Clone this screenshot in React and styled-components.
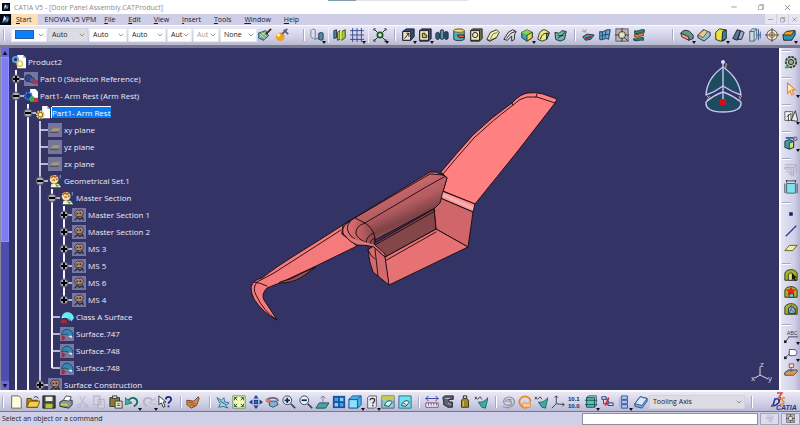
import React from "react";
import styled, { createGlobalStyle } from "styled-components";
import { FiChevronDown, FiMinus, FiX } from "react-icons/fi";
import { VscChromeRestore } from "react-icons/vsc";

const line = { fill: "none", stroke: "#111", strokeWidth: 1 };

// every glyph is drawn on a 16 x 16 grid
const glyphs = {
    app: (
        <>
            <rect width="16" height="16" fill="#05070f" />
            <path d="M2 13 9 3l5 2-5 7z" fill="#1d5fb8" />
            <path d="M6 2l3 5-5 4z" fill="#e8f4ff" />
            <path d="M9 7l4 1-3 5z" fill="#e8862a" />
        </>
    ),
    brush: (
        <>
            <path d="M0 6l9-3 3 6-6 5-6-3z" fill="#5aa4bd" stroke="#1b4a63" />
            <path d="M2 7l6 5M4 5l6 5M2 11l7-7" stroke="#eceb7c" />
            <path d="M9 7l6-6" stroke="#3b2a14" strokeWidth="2" />
        </>
    ),
    wizard: (
        <>
            <circle cx="6" cy="10" r="5" fill="#f0a020" />
            <circle cx="4" cy="8" r="2" fill="#fff0a8" />
            <path d="M8 7l6-6M10 2l5 5" stroke="#5a5a78" strokeWidth="2" />
        </>
    ),
    bodies: (
        <>
            <path d="M1 3l2-2 3 1v9l-2 1-3-2z" fill="#dcdcf0" stroke="#777" />
            <path d="M10 6l3-1 2 1v7l-2 1-3-1z" fill="#5a87a8" stroke="#16324a" />
            <path d="M5 13l6-2" stroke="#2c6a8a" />
        </>
    ),
    compare: (
        <>
            <path d="M1 3l3-1v9l-3 1z" fill="#4d86a8" stroke="#16324a" />
            <path d="M5 5l3-2v10l-3 1zM10 4l4-2v9l-4 3z" fill="#a7c840" stroke="#26401a" />
            <path d="M9 3v10" stroke="#e8e46a" strokeWidth="2" />
        </>
    ),
    grid: <path d="M0 3h16M0 8h16M0 13h16M3 0v16M8 0v16M13 0v16" stroke="#30408c" fill="none" />,
    snap: (
        <>
            <circle cx="8" cy="8" r="3" fill="#d6f0c8" stroke="#1b5a2a" strokeWidth="2" />
            <path d="M2 2l3 3M14 2l-3 3M2 14l3-3M14 14l-3-3M1 3V1h2M13 1h2v2M1 13v2h2M15 13v2h-2" {...line} />
        </>
    ),
    pad: (
        <>
            <path d="M2 4l4-3h9v9l-4 4H2z" fill="#3a4a78" stroke="#0d1222" />
            <path d="M2 4h9v10H2z" fill="#e9e6c8" stroke="#0d1222" />
            <path d="M4 12l5-6M9 6v4M9 6H6" stroke="#111" />
        </>
    ),
    pocket: (
        <>
            <path d="M2 3l2-2h11v11l-3 3H2z" fill="#4a4a66" stroke="#0d1222" />
            <path d="M2 3h10v11H2z" fill="#eeeab0" stroke="#0d1222" />
            <path d="M5 6v5h5V8H8V6z" fill="#bdbb68" stroke="#222" />
        </>
    ),
    shaft: (
        <>
            <rect x="1" y="5" width="4" height="8" rx="2" fill="#35627e" stroke="#0c2130" />
            <rect x="6" y="2" width="4" height="11" rx="2" fill="#5892b0" stroke="#0c2130" />
            <rect x="11" y="4" width="4" height="9" rx="2" fill="#2b4f66" stroke="#0c2130" />
        </>
    ),
    groove: (
        <>
            <path d="M2 3c2-2 10-2 12 0v10c-2 2-10 2-12 0z" fill="#57a9bd" stroke="#163c4a" />
            <ellipse cx="8" cy="3" rx="6" ry="2" fill="#eedf7c" stroke="#6a5a14" />
            <path d="M6 8h8v3H8z" fill="#d66a2a" stroke="#451a08" />
        </>
    ),
    hole: (
        <>
            <path d="M2 3l2-2h11v11l-3 3H2z" fill="#73704a" stroke="#14140d" />
            <path d="M2 3h10v11H2z" fill="#f2eeb4" stroke="#14140d" />
            <circle cx="7" cy="8" r="3" fill="#e4e4e4" stroke="#111" />
        </>
    ),
    rib: (
        <>
            <path d="M1 13l4-8 7-3 3 3-3 6-8 4z" fill="#f1edaf" stroke="#2a2a14" />
            <path d="M5 12l3-5 5-2" stroke="#707044" fill="none" />
            <path d="M1 13l3 2 8-4" stroke="#222" fill="#aaa860" />
        </>
    ),
    slot: (
        <>
            <path d="M1 13l5-8 5-3 4 2-2 4v5l-3 2V9l-5 5z" fill="#e4e6ea" stroke="#14141c" />
            <path d="M4 12l5-6 5-2" stroke="#14141c" fill="none" />
        </>
    ),
    solid: (
        <>
            <path d="M2 5l6-3 6 3v6l-6 4-6-4z" fill="#46a9b0" stroke="#113038" />
            <path d="M2 5l6-3 6 3-6 3z" fill="#8ad84c" />
            <path d="M8 8l6-3v6l-6 4z" fill="#e6d83c" stroke="#333" />
        </>
    ),
    loft: (
        <>
            <path d="M1 13c1-7 3-11 8-11l5 3-3 8-5 2z" fill="#e9ea8a" stroke="#24240d" />
            <path d="M4 13c1-5 3-7 8-7" {...line} />
            <path d="M11 6l3 0-3 7z" fill="#5cab9c" stroke="#123" />
        </>
    ),
    loftCut: (
        <>
            <path d="M1 5l5 1 3-3 5 1-2 9-5 2-5-2z" fill="#70b7a8" stroke="#0f2c2c" />
            <path d="M4 8c3 2 5 2 8-3M5 12c2-4 4-4 6-3" {...line} />
        </>
    ),
    extract: (
        <>
            <path d="M2 10l5-3 8 1-4 5-6 1z" fill="#3c9aa4" stroke="#0c2c38" />
            <path d="M5 12l7-2" stroke="#c03" strokeWidth="2" />
            <path d="M2 1l4 5M4 5l2-4M1 4h5" stroke="#e08a7c" />
        </>
    ),
    surface: (
        <>
            <path d="M2 4c4 2 6-3 12-2l-2 11c-4-3-6 2-10 0z" fill="#66a9d4" stroke="#0f2a44" />
            <path d="M5 4v9M9 3l-1 8M3 9c3 0 6-3 10-1" stroke="#123c66" fill="none" />
        </>
    ),
    inspect: (
        <>
            <rect x="1" y="1" width="14" height="14" fill="#b5b3bd" stroke="#555" />
            <circle cx="8" cy="8" r="4" fill="#e8e4c0" stroke="#333" />
            <path d="M8 0v5M8 11v5M0 8h5M11 8h5M10 10l5 5" stroke="#333" />
        </>
    ),
    layers: (
        <>
            <path d="M3 3c4 2 6-2 11-1v3c-5-1-7 3-11 1z" fill="#2c8c80" stroke="#0b3a38" />
            <path d="M3 7c4 2 6-2 10-1v3c-4-1-6 3-10 1z" fill="#de8a3e" stroke="#6a3311" />
            <path d="M2 12c4 2 6-2 11-1v3c-5-1-7 2-11 0z" fill="#2c8c80" stroke="#0b3a38" />
        </>
    ),
    fillet: (
        <>
            <path d="M1 6c2-4 7-4 10-2l4 4v4l-5 2z" fill="#5c9a8a" stroke="#122" />
            <path d="M1 6l9 4v4l-8-4z" fill="#e3a98a" stroke="#412" />
        </>
    ),
    chamfer: (
        <>
            <path d="M1 8l6-6 8 3v4l-7 6-7-4z" fill="#8fc3d8" stroke="#223" />
            <path d="M1 8l7-6 4 2-5 7z" fill="#ecc68e" stroke="#653" />
        </>
    ),
    draft: (
        <>
            <path d="M2 5l4-4 7 1-1 12-5 1-5-2z" fill="#e9e538" stroke="#22230a" />
            <path d="M10 4l4-2v10l-5 3z" fill="#388a9a" stroke="#112" />
        </>
    ),
    shell: (
        <>
            <path d="M2 12L7 2l4 1-4 11z" fill="#5d7790" stroke="#131a2c" />
            <path d="M8 13l3-10 4 2-3 8z" fill="#9eb2c4" stroke="#131a2c" />
        </>
    ),
    thickness: (
        <>
            <path d="M2 4l3-3h5v11l-3 3H2z" fill="#c9dbe6" stroke="#45586a" />
            <path d="M2 4h5v11M7 4l3-3" {...line} stroke="#45586a" />
            <path d="M12 1v13M10 8h5M14 4v8" stroke="#2d5f92" />
        </>
    ),
    target: (
        <>
            <circle cx="8" cy="8" r="6" fill="#f2ead0" stroke="#5a4a3a" />
            <path d="M8 0v16M0 8h16" stroke="#4a3a2a" />
            <circle cx="8" cy="8" r="3" fill="none" stroke="#8a6a4a" />
        </>
    ),
    split: (
        <>
            <path d="M1 8l4-4 10-1v5l-4 6H2z" fill="#2a93b0" stroke="#122" />
            <path d="M1 8l4-4 9-1-3 5z" fill="#eaa02a" stroke="#531" />
        </>
    ),
    gear: (
        <>
            <circle cx="8" cy="8" r="6" fill="#bcc4bc" stroke="#2d3a30" strokeWidth="2" strokeDasharray="3 1" />
            <circle cx="8" cy="8" r="3" fill="#93a893" stroke="#222" />
            <path d="M3 11l3 3M1 14h4" stroke="#3f9d56" strokeWidth="2" />
        </>
    ),
    cursor: <path d="M4 1v12l3-3 2 5 2-1-2-5h4z" fill="#ffe8c8" stroke="#e88a28" strokeWidth="1.2" />,
    sketch: (
        <>
            <path d="M1 3h9v10H1z" fill="#f3f3f8" stroke="#555" />
            <path d="M8 13l5-11 3 12zM3 9l5-4v8M5 6v8" fill="#fff" fillOpacity=".6" stroke="#333" />
        </>
    ),
    assembly: (
        <>
            <path d="M1 6l5-2 5 2v7l-5 2-5-2z" fill="#3fa09a" stroke="#0d2b34" />
            <path d="M6 8l5-2v7l-5 2z" fill="#d8dd78" stroke="#0d2b34" />
            <path d="M2 2h8l4 3" stroke="#2c5bb4" strokeWidth="2" fill="none" />
            <circle cx="13" cy="3" r="2" fill="#b9b6c8" stroke="#555" />
        </>
    ),
    ghost: (
        <path d="M1 5h10v10M1 5v2h8v8M11 5l3-3v9M1 2h13M3 10h4v4" fill="none" stroke="#a9a9bc" />
    ),
    box: (
        <>
            <path d="M3 4h10v11H3z" fill="#7fe3ee" stroke="#30606c" />
            <path d="M2 1h12M3 0v3M13 0v3M15 4v11M1 4v11" stroke="#333" />
        </>
    ),
    point: <rect x="6" y="6" width="4" height="4" fill="#14246c" />,
    segment: <path d="M2 14L14 2" stroke="#2a3c8c" strokeWidth="1.5" />,
    plane: <path d="M1 11l5-6h9l-5 6z" fill="#eef0a4" stroke="#54541e" />,
    domePick: (
        <>
            <path d="M1 14V6c1-5 12-6 14 0v8z" fill="#9cb52a" stroke="#252c08" />
            <path d="M5 14V8c1-3 5-3 6 0v6z" fill="#e9df6a" stroke="#333" />
            <path d="M9 6v8l2-2 2 3 1-1-2-3h3z" fill="#111" />
        </>
    ),
    domeRed: (
        <>
            <path d="M1 14V6c1-5 12-6 14 0v8z" fill="#a5b62a" stroke="#252c08" />
            <path d="M8 2l2 3 4 0-3 3 1 4-4-2-4 2 1-4-3-3 4 0z" fill="#e5261c" />
            <path d="M6 10h5v4H6z" fill="#73cbd0" stroke="#333" />
        </>
    ),
    domeMap: (
        <>
            <path d="M1 14V6c1-5 12-6 14 0v8z" fill="#a5b62a" stroke="#252c08" />
            <path d="M5 13V7l4-3 4 4v5z" fill="#68cfd6" stroke="#224" />
            <path d="M6 13l3-8 5 6M7 8l6 5" stroke="#b0286a" fill="none" />
        </>
    ),
    callout: (
        <>
            <text x="3" y="7" fontFamily="Liberation Sans" fontSize="6" fill="#333a58">ABC</text>
            <path d="M5 9h11M6 9l-4 5" stroke="#333a58" />
            <rect x="0" y="13" width="3" height="3" fill="#222" />
        </>
    ),
    tag: (
        <>
            <path d="M6 4h5c5 0 5 7 0 7H6zM6 9l-4 4" fill="#fff" stroke="#333a78" />
            <rect x="0" y="12" width="3" height="3" fill="#222" />
        </>
    ),
    apply: (
        <>
            <path d="M1 11l4-3h10l-4 5H1z" fill="#53b7ba" stroke="#225" />
            <path d="M1 11v3h10l4-4V8" fill="#de9750" stroke="#642" />
            <path d="M6 1h5v4H6zM8 5v5" fill="#f5e8e8" stroke="#a34" />
        </>
    ),
    page: <path d="M3 1h8l3 3v11H3z" fill="#fffde0" stroke="#5d5d48" />,
    open: (
        <>
            <path d="M1 4h5l1 2h6v8H1z" fill="#b98a1a" stroke="#553c06" />
            <path d="M1 14l3-7h12l-3 7z" fill="#f4ce4c" stroke="#6a4c0a" />
            <path d="M9 3c2-2 4-1 5 1" {...line} />
        </>
    ),
    save: (
        <>
            <path d="M1 1h14v14H1z" fill="#44484a" stroke="#15180f" />
            <path d="M4 2h8v5H4z" fill="#f0f0dc" />
            <path d="M4 10h8v5H4z" fill="#b9c42c" />
        </>
    ),
    print: (
        <>
            <path d="M1 8l4-2h10v5l-4 4-10-2z" fill="#8a9aa0" stroke="#222" />
            <path d="M5 6l3-5 6 1-2 5z" fill="#fff" stroke="#444" />
            <path d="M2 11h8" stroke="#d0d42c" strokeWidth="2" />
        </>
    ),
    cut: <path d="M4 1l6 10M11 1L5 11M5 11a2 2 0 1 0 0 3zM10 11a2 2 0 1 1 0 3z" fill="none" stroke="#b1b1c4" />,
    copy: <path d="M2 1h7v10H2zM7 5h7v10H7zM9 8h3M9 11h3" fill="#d5d5e4" stroke="#aaaabc" />,
    paste: (
        <>
            <path d="M1 3h11v10H1z" fill="#8c7c3c" stroke="#2c2814" />
            <path d="M4 1h5v3H4z" fill="#d8d8d8" stroke="#333" />
            <path d="M7 7h8v8H7z" fill="#e8eecb" stroke="#333" />
            <path d="M9 10h4M9 12h4" stroke="#555" />
        </>
    ),
    undo: (
        <>
            <path d="M4 6c4-5 10-2 10 2 0 3-2 4-4 5" fill="none" stroke="#16705e" strokeWidth="2" />
            <path d="M0 3v8l8-2z" fill="#3fb59a" stroke="#16705e" />
        </>
    ),
    redo: (
        <>
            <path d="M12 6c-4-5-10-2-10 2 0 3 2 4 4 5" fill="none" stroke="#b4b4c6" strokeWidth="2" />
            <path d="M16 3v8l-8-2z" fill="#d4d4e0" stroke="#b4b4c6" />
        </>
    ),
    what: (
        <>
            <path d="M1 1v10l3-2 2 5 2-1-2-5h3z" fill="#fff" stroke="#222" />
            <path d="M9 5c0-4 6-4 6 0 0 3-3 2-3 5M12 12v2" fill="none" stroke="#1c2c86" strokeWidth="2" />
        </>
    ),
    hand: (
        <>
            <path d="M1 6l8 1 5-5 1 2-3 8-6 3-5-4z" fill="#d98b54" stroke="#6a3a16" />
            <path d="M3 8l8 2M4 11l6 1" stroke="#8a4a20" />
        </>
    ),
    fly: (
        <>
            <path d="M1 3l5 3 3-3 1 5 5 1-4 3 3 3-6-2-5 1 2-4z" fill="#a9d4e4" stroke="#2a6a8a" />
            <path d="M5 7l6 4" stroke="#245" />
        </>
    ),
    fit: (
        <>
            <path d="M1 1h14v14H1z" fill="#f8f8bc" stroke="#5f8a52" />
            <path d="M3 3l3 3M13 3l-3 3M3 13l3-3M13 13l-3-3M3 6V3h3M13 6V3h-3M3 10v3h3M13 10v3h-3" {...line} stroke="#17501f" />
        </>
    ),
    pan: (
        <>
            <path d="M8 0l3 4H5zM8 16l3-4H5zM0 8l4-3v6zM16 8l-4-3v6z" fill="#1d3f96" />
            <rect x="6" y="6" width="4" height="4" fill="#2c72c0" stroke="#13296a" />
        </>
    ),
    rotate: (
        <>
            <path d="M2 8c0-6 12-6 13-1" fill="none" stroke="#6f6470" strokeWidth="2" />
            <path d="M5 7l8 0 2 4-6 3-4-2z" fill="#7fb1d6" stroke="#345" />
            <path d="M0 5l4 5 3-5z" fill="#d98264" />
        </>
    ),
    zoomIn: (
        <>
            <path d="M10 10l5 5" stroke="#445" strokeWidth="2" />
            <circle cx="6" cy="6" r="5" fill="#e5f4fb" stroke="#334" />
            <path d="M3 6h6M6 3v6" stroke="#12254e" strokeWidth="2" />
        </>
    ),
    zoomOut: (
        <>
            <path d="M10 10l5 5" stroke="#445" strokeWidth="2" />
            <circle cx="6" cy="6" r="5" fill="#e5f4fb" stroke="#334" />
            <path d="M3 6h6" stroke="#12254e" strokeWidth="2" />
        </>
    ),
    normal: (
        <>
            <path d="M1 15l4-6h11l-4 6z" fill="#49a8a0" stroke="#134a4a" />
            <path d="M9 11V2M6 4l3-3 3 3" fill="none" stroke="#8a66b0" />
        </>
    ),
    views: (
        <>
            <rect x="1" y="1" width="14" height="14" fill="#1b4fa4" />
            <path d="M3 3h4v4H3zM9 9h4v4H9z" fill="#3fa4e4" />
            <path d="M9 3h4v4H9zM3 9h4v4H3z" fill="#7fd4f8" />
        </>
    ),
    iso: (
        <>
            <path d="M1 5l4-4h10v10l-4 4H1z" fill="#42b8ea" stroke="#1d4c8a" />
            <path d="M1 5h10v10M11 5l4-4" fill="none" stroke="#1d4c8a" />
            <path d="M2 6h8v8H2z" fill="#8fe0fb" />
        </>
    ),
    hidden: (
        <>
            <path d="M3 3l2-2h8v12l-2 2H3z" fill="#e8e8f2" stroke="#556" />
            <path d="M6 6c0-3 5-3 5 0 0 2-2 2-2 4M9 11v2" fill="none" stroke="#223" strokeWidth="1.4" />
        </>
    ),
    hideA: (
        <>
            <path d="M1 1h14v14H1z" fill="#7fd2de" stroke="#556" />
            <path d="M1 1h14v5H1z" fill="#c6c95a" />
            <path d="M4 12c1-5 6-7 9-4l-4 5z" fill="#d5f3ee" stroke="#234" />
        </>
    ),
    hideB: (
        <>
            <path d="M1 1h14v14H1z" fill="#6fe0ee" stroke="#367" />
            <path d="M4 12c1-5 6-7 9-4l-4 5z" fill="#e0f3f8" stroke="#234" />
            <path d="M6 9l3 2" stroke="#234" />
        </>
    ),
    ruler: (
        <>
            <path d="M1 9h14v5H1z" fill="#f3f0f6" stroke="#7a4a6a" />
            <path d="M4 9v3M7 9v3M10 9v3M13 9v3" stroke="#7a4a6a" />
            <path d="M1 4h14M4 1L1 4l3 3M12 1l3 3-3 3" fill="none" stroke="#27389a" />
        </>
    ),
    measure: (
        <>
            <path d="M4 1h10v4H9v3h4v6H8l-5-3V7l-1-4z" fill="#5d6370" stroke="#161a24" />
            <path d="M5 4h5M8 9l3 2" stroke="#c6ccd4" />
        </>
    ),
    weight: (
        <>
            <path d="M4 6l2-2h4l2 2v8H4z" fill="#9c8a28" stroke="#33280a" />
            <path d="M6 4V1h4v3" {...line} />
            <path d="M6 7v6" stroke="#e4d46c" />
        </>
    ),
    measureSurf: (
        <>
            <path d="M5 8c4 1 7-1 11-5l-3 12-4-1z" fill="#3cae9f" stroke="#18605c" />
            <path d="M1 2l3 3 3-3 2 3M1 5l2-3" fill="none" stroke="#333" />
        </>
    ),
    swirl: (
        <path d="M8 8c1-2 4-1 4 1 0 4-8 4-9-1 0-6 9-8 12-2 2 6-7 11-13 7M5 8c1-3 5-4 7-2" fill="none" stroke="#8e9096" strokeWidth="1.3" />
    ),
    update: (
        <>
            <path d="M13 13c-8 5-14-4-10-9 5-5 12-1 11 4" fill="none" stroke="#ee8428" strokeWidth="2" />
            <path d="M5 13c1-6 3-6 4-3l5-1v5H7z" fill="#ffcf9c" stroke="#ee8428" />
        </>
    ),
    axis: <path d="M6 1v9l9 1M6 10l-5 5M4 3l2-2 2 2M13 9l2 2-2 2" {...line} stroke="#333" />,
    values: (
        <g fontFamily="Liberation Sans" fontSize="7" fontWeight="700" fill="#222a4a">
            <text x="1" y="7">10.1</text>
            <text x="1" y="15">10.0</text>
        </g>
    ),
    cylinder: (
        <>
            <path d="M3 3h9v11H3z" fill="#54c4b4" stroke="#145" />
            <path d="M3 3l2-2h9v11l-2 2M1 6h14M1 11h14" fill="none" stroke="#164a4a" />
        </>
    ),
    links: (
        <>
            <path d="M2 2h5v3H2zM9 9h6v3H9z" fill="#d8dcf0" stroke="#237" />
            <path d="M4 5v5h6M7 4l4 5" fill="none" stroke="#237" />
            <path d="M10 3l-4 9" stroke="#d22" strokeWidth="2" />
        </>
    ),
    stack: (
        <>
            <path d="M5 1h7v4H5zM5 6h7v4H5zM5 11h7v4H5z" fill="#a9c6ea" stroke="#2c4a9a" />
            <path d="M3 3v10" stroke="#9ab" />
        </>
    ),
    eraser: (
        <>
            <path d="M1 10l6-8 8 2v3l-6 8-8-2z" fill="#7fb0e4" stroke="#28488c" />
            <path d="M1 10l6-8 8 2-6 8z" fill="#d4e6f8" stroke="#28488c" />
        </>
    ),
    treeProduct: (
        <>
            <path d="M6 0h7l3 3v12H6z" fill="#fff" />
            <path d="M13 0v3h3z" fill="#78a8a0" />
            <circle cx="4" cy="5" r="3" fill="none" stroke="#56a2f0" strokeWidth="2" />
            <circle cx="9" cy="10" r="3" fill="#fff" stroke="#e6cc5c" strokeWidth="2" />
        </>
    ),
    treeHidden: (
        <>
            <rect width="16" height="16" fill="#77779c" />
            <circle cx="5" cy="7" r="4" fill="#2d478f" stroke="#1a2d66" />
            <circle cx="9" cy="9" r="3" fill="#5a5a7c" stroke="#333a66" />
            <path d="M10 9h6v5h-6z" fill="#a23a50" />
        </>
    ),
    treePart: (
        <>
            <path d="M7 0h6l3 3v11H7z" fill="#fff" />
            <circle cx="5" cy="8" r="4" fill="#133f98" stroke="#3f7fdc" strokeWidth="2" strokeDasharray="2 1" />
            <circle cx="9" cy="11" r="3" fill="#32b048" />
            <path d="M11 10h5v5h-5z" fill="#d8303c" />
        </>
    ),
    treeGear: (
        <>
            <path d="M7 0h6l3 3v11H7z" fill="#fff" />
            <path d="M13 0v3h3z" fill="#4f9c90" />
            <circle cx="5" cy="10" r="4" fill="#8c6a1a" stroke="#f3d878" strokeWidth="2" strokeDasharray="2 1" />
            <circle cx="5" cy="10" r="2" fill="#fff2b0" />
        </>
    ),
    treePlane: (
        <>
            <rect width="16" height="16" fill="#76769c" />
            <path d="M2 10l4-4h8l-3 4z" fill="#a49c72" />
            <path d="M2 10h10v1H2z" fill="#3d3d45" />
        </>
    ),
    treeSet: (
        <>
            <circle cx="7" cy="6" r="5" fill="#f3dfa0" />
            <path d="M3 5l3-3 2 2 3-2M5 7h3M9 6h2" stroke="#ad5a1c" fill="none" strokeWidth="1.5" />
            <path d="M4 11h8l3 4H3z" fill="#f1f3c8" />
            <path d="M8 11l5 2-3 2z" fill="#67a440" />
            <path d="M14 1v4" stroke="#7fb6ee" />
        </>
    ),
    treeSetHidden: (
        <>
            <rect width="16" height="16" fill="#77779f" />
            <path d="M3 5l3-3 2 1 3-1 2 3-1 4-4 1-4-1z" fill="#b08c74" stroke="#33333c" />
            <path d="M5 6h2M9 5l1 2" stroke="#5a2c1c" strokeWidth="2" />
            <path d="M3 14l3-3 3 2 3-2 1 3" stroke="#2b2b36" fill="none" strokeWidth="1.5" />
        </>
    ),
    treeSurface: (
        <>
            <path d="M2 9c0-8 12-9 14 0l-3 4c-1-4-7-6-11-4z" fill="#5cf0f4" />
            <path d="M2 9c4-2 8 0 9 3" stroke="#fff" fill="none" />
            <path d="M1 11h6l1 4H1z" fill="#b0242f" />
        </>
    ),
    treeSurfaceHidden: (
        <>
            <rect width="16" height="16" fill="#77779f" />
            <path d="M2 9c0-8 11-9 13 0l-3 4c-1-4-6-6-10-4z" fill="#3489b4" stroke="#1b4468" />
            <path d="M2 10h3v2h2l-3 3H2z" fill="#a22a3a" />
            <path d="M9 10l5 0-1 3z" fill="#e6e6f4" />
        </>
    ),
};

const Glyph = ({ name, size = 14 }) => (
    <svg width={size} height={size} viewBox="0 0 16 16" aria-hidden="true">{glyphs[name]}</svg>
);

// a trailing "+" marks a button that opens a flyout
const Tools = ({ items, vertical, grow }) => (
    <ToolGroup $vertical={vertical} $grow={grow ? items.length : 0}>
        {items.map((item) => {
            const name = item.replace("+", "");
            return (
                <ToolButton key={name} $grow={grow} aria-label={name}>
                    <Glyph name={name} />
                    {item.endsWith("+") && <Flyout />}
                </ToolButton>
            );
        })}
    </ToolGroup>
);

const Combo = ({ label, value, swatch, width, muted, disabled }) => (
    <ComboBox $width={width} $muted={muted}>
        <ComboSelect aria-label={label} disabled={disabled}>
            <option aria-label={label}>{value}</option>
        </ComboSelect>
        {swatch && <Swatch />}
        <FiChevronDown size={8} color="#666" />
    </ComboBox>
);

const menus = ["Start", "ENOVIA V5 VPM", "File", "Edit", "View", "Insert", "Tools", "Window", "Help"];

const combos = [
    { label: "Graphic color", swatch: true, width: 36 },
    { label: "Transparency", value: "Auto", width: 40, muted: true },
    { label: "Line thickness", value: "Auto", width: 38 },
    { label: "Line type", value: "Auto", width: 38 },
    { label: "Point symbol", value: "Aut", width: 25 },
    { label: "Rendering", value: "Aut", width: 26, disabled: true },
    { label: "Layer", value: "None", width: 37 },
];

const masterSections = ["Master Section 1", "Master Section 2", "MS 3", "MS 5", "MS 6", "MS 4"].map((name) => ({
    name,
    icon: "treeSetHidden",
    knob: "+",
}));

const tree = [
    { name: "Part 0 (Skeleton Reference)", icon: "treeHidden", knob: "+" },
    {
        name: "Part1- Arm Rest (Arm Rest)",
        icon: "treePart",
        knob: "-",
        children: [
            {
                name: "Part1- Arm Rest",
                icon: "treeGear",
                knob: "-",
                selected: true,
                trunk: "#c2c2dc",
                children: [
                    { name: "xy plane", icon: "treePlane" },
                    { name: "yz plane", icon: "treePlane" },
                    { name: "zx plane", icon: "treePlane" },
                    {
                        name: "Geometrical Set.1",
                        icon: "treeSet",
                        knob: "-",
                        closed: true,
                        children: [
                            { name: "Master Section", icon: "treeSet", knob: "-", closed: true, children: masterSections },
                            { name: "Class A Surface", icon: "treeSurface" },
                            { name: "Surface.747", icon: "treeSurfaceHidden" },
                            { name: "Surface.748", icon: "treeSurfaceHidden" },
                            { name: "Surface.748", icon: "treeSurfaceHidden" },
                        ],
                    },
                    { name: "Surface Construction", icon: "treeSetHidden", knob: "+" },
                ],
            },
        ],
    },
];

const Branch = ({ nodes, closed, nested, trunk = "#f4f4ff" }) => (
    <BranchList $closed={closed} $nested={nested} $trunk={trunk}>
        {nodes.map((node, i) => (
            <li key={i}>
                <TreeRow>
                    <svg width="14" height="12" viewBox="0 0 14 12" aria-hidden="true">
                        <path d="M6 6h8" stroke="#e4e4f4" strokeWidth="1.5" />
                        {node.knob && <circle cx="6" cy="6" r="4" fill="#aaaab4" stroke="#55556a" />}
                        {node.knob && <path d={node.knob === "+" ? "M3 6h6M6 3v6" : "M3 6h6"} stroke="#000" strokeWidth="2" />}
                    </svg>
                    <Glyph name={node.icon} />
                    <TreeLabel $selected={node.selected}>{node.name}</TreeLabel>
                </TreeRow>
                {node.children && <Branch nodes={node.children} closed={node.closed} trunk={node.trunk} nested />}
            </li>
        ))}
    </BranchList>
);

const ArmRest = () => (
    <Model viewBox="9 48 770 342" preserveAspectRatio="xMidYMid meet" role="img" aria-label="Arm rest">
        <defs>
            <linearGradient id="cushion" x1="385" y1="193" x2="401" y2="231" gradientUnits="userSpaceOnUse">
                <stop offset="0" stopColor="#c8686c" />
                <stop offset=".45" stopColor="#b45c60" />
                <stop offset=".8" stopColor="#7c4246" />
                <stop offset="1" stopColor="#9c5054" />
            </linearGradient>
            <linearGradient id="fold" x1="459" y1="197" x2="455" y2="206" gradientUnits="userSpaceOnUse">
                <stop offset="0" stopColor="#f47c7e" />
                <stop offset=".5" stopColor="#ffb4b4" />
                <stop offset="1" stopColor="#d0686c" />
            </linearGradient>
            <linearGradient id="nose" x1="344" y1="236" x2="374" y2="236" gradientUnits="userSpaceOnUse">
                <stop offset="0" stopColor="#e87478" />
                <stop offset=".6" stopColor="#b85c60" />
                <stop offset="1" stopColor="#8a484c" />
            </linearGradient>
        </defs>
        <g stroke="#1a0a10" strokeWidth=".9" strokeLinejoin="round" strokeLinecap="round" fill="none">
            <path d="M441 172Q456 154 473 135Q493 116 512 103Q520 94 528 93Q536 92 543 94L557 99L555 103L517 152L475 204L443 191L447 178Z" fill="#ff8080" />
            <path d="M443 174Q458 156 474 138Q494 119 513 105Q520 98 527 97L537 97L555 103" />
            <path d="M512 103L513 105M537 94L536 97" />
            <path d="M442 191L475 204L473 212L440 198Z" fill="url(#fold)" />
            <path d="M440 198L473 212L468 247L436 229L434 208Z" fill="#d0666a" />
            <path d="M385 257L436 229L468 247L389 285Z" fill="#e67274" />
            <path d="M385 261L436 232" />
            <path d="M374 246L385 257L389 285L373 272Q369 262 368 250Z" fill="#d46a6e" />
            <path d="M375 249L378 276M368 250Q370 256 375 259" />

            <path d="M343 225Q318 241 297 254Q276 267 262 278Q253 280 251 287Q251 293 254 299Q263 313 277 320Q270 309 264 300Q261 294 267 288L282 282L316 266L357 246L342 234Z" fill="#f47a7c" />
            <path d="M257 282L274 273L341 230" />
            <path d="M280 283Q292 283 302 277L316 267L302 273Q291 280 280 282Z" fill="#985054" />
            <path d="M254 282Q261 283 267 286M257 282Q252 288 256 295Q264 312 277 320" />

            <path d="M343 225L356 217L430 172L436 172L443 175L447 178L442 195L440 203L435 208L375 240L374 246L357 245L345 235Z" fill="url(#cushion)" />
            <path d="M375 243L434 209L436 229L385 257L374 247Z" fill="#834649" />
            <path d="M375 245L435 211" />
            <path d="M346 223L430 174L443 175M365 223L426 187L444 177" />
            <path d="M345 225Q341 230 344 235Q350 241 360 245L374 246L375 238Q373 228 365 223L355 218Z" fill="url(#nose)" />
            <path d="M350 222Q344 228 351 236Q359 244 374 246M365 223Q355 226 356 234Q358 239 367 243M374 233Q366 236 366 243M375 238Q370 240 370 244" />
            <path d="M345 236Q351 243 357 245Q368 245 374 247L385 257L385 254L375 245" fill="#d8787a" />
        </g>
    </Model>
);

export default function App() {
    return (
        <Window>
            <GlobalStyle />
            <TitleBar>
                <Glyph name="app" size={8} />
                <Title>CATIA V5 - [Door Panel Assembly.CATProduct]</Title>
                <TitleTab aria-hidden="true" />
                <WindowButtons>
                    <button aria-label="Minimize"><FiMinus size={8} /></button>
                    <button aria-label="Restore"><VscChromeRestore size={8} /></button>
                    <button aria-label="Close"><FiX size={9} /></button>
                </WindowButtons>
            </TitleBar>

            <MenuBar>
                <Glyph name="app" size={11} />
                {menus.map((name, i) => (
                    <MenuButton key={name} $active={i === 0} $tight={i === 1}>
                        {i === 1 ? name : <><u>{name[0]}</u>{name.slice(1)}</>}
                    </MenuButton>
                ))}
                <ChildButtons>
                    <button aria-label="Minimize document"><FiMinus size={7} /></button>
                    <button aria-label="Restore document"><VscChromeRestore size={7} /></button>
                    <button aria-label="Close document"><FiX size={7} /></button>
                </ChildButtons>
            </MenuBar>

            <ToolBar>
                <Handle />
                <ComboRow>
                    {combos.map((combo) => <Combo key={combo.label} {...combo} />)}
                </ComboRow>
                <Tools items={["brush", "wizard"]} />
                <Handle $before={13} $after={4} />
                <Tools items={["bodies+"]} />
                <Divider />
                <Tools items={["compare", "grid+"]} />
                <Divider />
                <Tools items={["snap+"]} />
                <Handle $before={6} $after={4} />
                <Tools items={["pad+", "pocket+", "shaft", "groove", "hole", "rib", "slot", "solid+", "loft", "loftCut"]} />
                <Handle $before={5} $after={4} />
                <Tools items={["extract", "surface", "inspect", "layers"]} />
                <Handle $before={25} $after={5} />
                <Tools items={["fillet+", "chamfer", "draft+", "shell", "thickness", "target", "split+"]} />
            </ToolBar>

            <Workspace>
                <ScrollBar>
                    <ScrollButton aria-label="Scroll up">▲</ScrollButton>
                    <ScrollThumb />
                    <ScrollButton aria-label="Scroll down" $dark>▼</ScrollButton>
                </ScrollBar>

                <Viewport>
                    <ArmRest />
                    <TreePanel>
                        <RootRow>
                            <Glyph name="treeProduct" />
                            <TreeLabel>Product2</TreeLabel>
                        </RootRow>
                        <Branch nodes={tree} />
                    </TreePanel>
                    <Compass width="46" height="60" viewBox="700 56 46 60" aria-label="Compass">
                        <g fill="#1f4a60" stroke="#c8c8f4" strokeWidth="1.4" strokeLinejoin="round">
                            <path d="M723 67Q707 78 706 95Q715 92 723 86Q732 92 741 95Q739 78 723 67Z" />
                            <path d="M706 102Q714 95 723 92Q732 95 741 102Q742 112 723 112Q705 112 706 102Z" />
                            <path d="M723 64V101" />
                        </g>
                        <circle cx="723" cy="62" r="2" fill="#e4dcfa" />
                        <rect x="720" y="99" width="6" height="6" rx="1" fill="#d80d18" />
                        <path d="M707 96l3 3M710 96l-3 4M739 96l1 2 2-2M740 98v2M725 64h2l-2 3h2" fill="none" stroke="#c8a84c" />
                    </Compass>
                    <AxisMark width="28" height="29" viewBox="749 356 28 29" aria-label="Axis">
                        <path d="M760 367V375L755 378M760 375L768 379" fill="none" stroke="#d8d8e8" />
                        <text x="760" y="367">z</text>
                        <text x="751" y="381">x</text>
                        <text x="768" y="381">y</text>
                    </AxisMark>
                </Viewport>

                <SideBar>
                    <SideHandle />
                    <Tools vertical items={["gear"]} />
                    <SideHandle />
                    <Tools vertical items={["cursor+"]} />
                    <SideHandle />
                    <Tools vertical items={["sketch+"]} />
                    <SideHandle />
                    <Tools vertical items={["assembly+"]} />
                    <SideHandle />
                    <Tools vertical items={["ghost", "box"]} />
                    <SideHandle />
                    <Tools vertical items={["point", "segment", "plane"]} />
                    <SideHandle />
                    <Tools vertical items={["domePick", "domeRed", "domeMap"]} />
                    <SideHandle />
                    <Tools vertical items={["callout+", "tag+", "apply"]} />
                </SideBar>
            </Workspace>

            <ToolBar $bottom>
                <Handle $before={2} $after={4} />
                <Tools grow items={["page", "open", "save", "print", "cut", "copy", "paste", "undo+", "redo+", "what"]} />
                <Handle $before={6} $after={3} />
                <Tools grow items={["hand"]} />
                <Handle $before={8} $after={3} />
                <Tools grow items={["fly", "fit", "pan", "rotate", "zoomIn", "zoomOut", "normal", "views", "iso+", "hidden+", "hideA", "hideB"]} />
                <Handle $before={5} $after={3} />
                <Tools grow items={["ruler", "measure", "weight", "measureSurf"]} />
                <Handle $before={5} $after={3} />
                <Tools grow items={["swirl", "update", "measureSurf", "axis", "values", "cylinder+", "links", "stack+", "eraser"]} />
                <Combo label="Axis system" value="Tooling Axis" width={96} muted />
                <Handle $before={6} />
                <Logo width="28" height="20" viewBox="0 0 28 20" aria-label="CATIA">
                    <path d="M7 1h5L9 5c3 0 1 4-1 4" fill="none" stroke="#e0402c" strokeWidth="1.4" />
                    <path d="M3 13L5 7c5-1 6 3 1 6-2 1-4 1-5 1" fill="none" stroke="#2a3490" strokeWidth="1.6" />
                    <path d="M15 6c-3-1-4 1-2 3s0 4-3 3" fill="none" stroke="#e88a2c" strokeWidth="1.5" />
                    <text x="6" y="18">CATIA</text>
                </Logo>
            </ToolBar>

            <StatusBar>
                <label htmlFor="command">Select an object or a command</label>
                <CommandInput id="command" />
                <StatusButton aria-label="Power input"><Glyph name="ghost" size={8} /></StatusButton>
                <StatusButton aria-label="Knowledge inspector"><Glyph name="inspect" size={9} /></StatusButton>
            </StatusBar>
        </Window>
    );
}

const GlobalStyle = createGlobalStyle`
    * {
        box-sizing: border-box;
    }
    body {
        margin: 0;
        font-family: "Open Sans", "Liberation Sans", sans-serif;
        font-size: 7px;
        color: #222;
    }
    button {
        font: inherit;
        color: inherit;
        padding: 0;
        border: none;
        background: none;
    }
    svg {
        display: block;
        flex-shrink: 0;
    }
    ul {
        list-style: none;
        margin: 0;
        padding: 0;
    }
`;

const Window = styled.div`
    display: flex;
    flex-direction: column;
    height: 100vh;
    overflow: hidden;
    background: #cfcfe7;
`;

const TitleBar = styled.header`
    display: flex;
    align-items: center;
    height: 14px;
    padding-left: 2px;
    background: #fff;
    position: relative;
`;

const Title = styled.h1`
    margin: 0 0 0 4px;
    font-size: 7px;
    font-weight: 400;
    color: #8c8c8c;
`;

const TitleTab = styled.div`
    position: absolute;
    top: 0;
    left: 41%;
    width: 140px;
    height: 1px;
    background: linear-gradient(90deg, #7f9cae 20%, #e4e4e4 20%);
`;

const WindowButtons = styled.div`
    display: flex;
    gap: 2px;
    margin-left: auto;
    color: #777;

    button {
        display: grid;
        place-items: center;
        width: 25px;
        height: 12px;
    }
`;

const MenuBar = styled.nav`
    display: flex;
    align-items: stretch;
    height: 11px;
    background: #cecee6;
`;

const MenuButton = styled.button`
    padding: 0 ${(p) => (p.$tight ? 1 : 6)}px 0 ${(p) => (p.$active ? 4 : 7)}px;
    margin-left: ${(p) => (p.$active ? 1 : 0)}px;
    line-height: 11px;
    color: #1a1a2c;
    background: ${(p) => (p.$active ? "#fbe0b4" : "none")};
`;

const ChildButtons = styled.div`
    display: flex;
    gap: 1px;
    margin-left: auto;

    button {
        display: grid;
        place-items: center;
        width: 11px;
        height: 10px;
        background: #e6e6ee;
        color: #777;
    }
`;

const ToolBar = styled.div`
    display: flex;
    align-items: center;
    flex-shrink: 0;
    height: ${(p) => (p.$bottom ? 22 : 23)}px;
    padding-bottom: ${(p) => (p.$bottom ? 0 : 2)}px;
    border-top: ${(p) => (p.$bottom ? 2 : 1)}px solid #fafaff;
    border-bottom: ${(p) => (p.$bottom ? 1 : 3)}px solid #77778c;
    background: linear-gradient(#e9e9f5, #cfcfe6 60%, #b9b9d4);
`;

const Handle = styled.span`
    flex-shrink: 0;
    width: 2px;
    height: 12px;
    margin: 0 ${(p) => p.$after || 5}px 0 ${(p) => p.$before || 3}px;
    border-left: 1px solid #a9a9c2;
    border-right: 1px solid #fff;
`;

const Divider = styled.span`
    width: 1px;
    align-self: stretch;
    margin: 0 3px;
    background: #eeeef8;
`;

const ComboRow = styled.div`
    display: flex;
    gap: 1px;
    margin-left: 1px;
`;

const ComboBox = styled.div`
    display: grid;
    align-items: center;
    width: ${(p) => p.$width}px;
    height: 14px;
    background: ${(p) => (p.$muted ? "#dcdce2" : "#fff")};
    border: 1px solid ${(p) => (p.$muted ? "#d2d2de" : "#e8e8f0")};

    > * {
        grid-area: 1 / 1;
    }

    svg {
        justify-self: end;
        margin-right: 1px;
        pointer-events: none;
    }
`;

const ComboSelect = styled.select`
    appearance: none;
    width: 100%;
    height: 100%;
    padding: 0 3px;
    border: none;
    background: transparent;
    font: inherit;
    color: #222;

    &:disabled {
        color: #a0a0a0;
        opacity: 1;
    }
`;

const Swatch = styled.span`
    width: 19px;
    height: 9px;
    margin-left: 3px;
    background: #0a80ff;
    border: 1px solid #2c5c9c;
    pointer-events: none;
`;

const ToolGroup = styled.div`
    display: flex;
    flex: ${(p) => (p.$grow ? `${p.$grow} 1 0` : "none")};
    flex-direction: ${(p) => (p.$vertical ? "column" : "row")};
    align-items: center;
    gap: ${(p) => (p.$grow ? 0 : 1)}px;
`;

const ToolButton = styled.button`
    position: relative;
    display: grid;
    place-items: center;
    flex: ${(p) => (p.$grow ? "1 1 0" : "none")};
    width: 16px;
    height: 16px;
`;

const Flyout = styled.span`
    position: absolute;
    right: -1px;
    bottom: -1px;
    border: 2px solid transparent;
    border-top: 3px solid #111;
    border-bottom: none;
`;

const Workspace = styled.main`
    display: flex;
    flex: 1;
    min-height: 0;
`;

const ScrollBar = styled.div`
    display: flex;
    flex-direction: column;
    width: 9px;
    border-left: 1px solid #8c8ca0;
    background: #4e4eac;
`;

const ScrollButton = styled.button`
    height: 9px;
    margin-top: ${(p) => (p.$dark ? "auto" : 0)};
    font-size: 7px;
    line-height: 9px;
    color: #0a0a28;
    background: #6a6ad0;
`;

const ScrollThumb = styled.div`
    height: 54%;
    background: #7c7cf6;
    border: 1px solid #9494ff;
`;

const Viewport = styled.section`
    display: grid;
    flex: 1;
    grid-template-rows: 100%;
    grid-template-columns: 100%;
    position: relative;
    overflow: hidden;
    background: #333366;
`;

const Model = styled.svg`
    grid-area: 1 / 1;
    width: 100%;
    height: 100%;
`;

const TreePanel = styled.div`
    grid-area: 1 / 1;
    padding: 5px 0 0 1px;
    font-size: 8px;
    color: #ececf6;
`;

const TreeRow = styled.div`
    display: flex;
    align-items: center;
    height: 17px;
`;

const RootRow = styled(TreeRow)`
    padding-left: 2px;
`;

const TreeLabel = styled.span`
    margin-left: 2px;
    line-height: 11px;
    white-space: nowrap;
    color: ${(p) => (p.$selected ? "#fff" : "inherit")};
    background: ${(p) => (p.$selected ? "#0a78f0" : "none")};
    box-shadow: ${(p) => (p.$selected ? "0 -1px #fff, -1px 0 #fff" : "none")};
`;

const BranchList = styled.ul`
    margin-left: ${(p) => (p.$nested ? 12 : 0)}px;
    background: linear-gradient(${(p) => p.$trunk}, ${(p) => p.$trunk}) 5px 0 / 2px ${(p) => (p.$closed ? "calc(100% - 8px)" : "100%")} no-repeat;
`;

const Compass = styled.svg`
    position: absolute;
    top: 8px;
    right: 33px;
`;

const AxisMark = styled.svg`
    position: absolute;
    right: 2px;
    bottom: 5px;

    text {
        font-size: 8px;
        fill: #d8d8e8;
    }
`;

const SideBar = styled.aside`
    display: flex;
    flex-direction: column;
    align-items: center;
    width: 21px;
    border-left: 2px solid #fafaff;
    background: linear-gradient(90deg, #e4e4f4, #cfcfe8 70%, #b4b4d0);
`;

const SideHandle = styled.span`
    width: 9px;
    height: 2px;
    margin: 2px 9px 2px 0;
    border-top: 1px solid #a9a9c2;
    border-bottom: 1px solid #fff;

    &:not(:first-child) {
        margin-top: 7px;
    }
`;

const Logo = styled.svg`
    margin: 0 2px 0 12px;

    text {
        font: italic 700 7px "Liberation Sans", sans-serif;
        fill: #2a3480;
    }
`;

const StatusBar = styled.footer`
    display: flex;
    align-items: center;
    flex-shrink: 0;
    gap: 2px;
    height: 13px;
    padding-left: 2px;
    background: #cfcfe7;
`;

const CommandInput = styled.input`
    width: 22%;
    height: 12px;
    margin-left: auto;
    padding: 0 2px;
    border: 1px solid #8c8c9c;
    background: #fff;
    font: inherit;
`;

const StatusButton = styled.button`
    display: grid;
    place-items: center;
    width: 19px;
    height: 12px;
    border: 1px solid #a4a4b8;
    background: #dcdcec;
`;
